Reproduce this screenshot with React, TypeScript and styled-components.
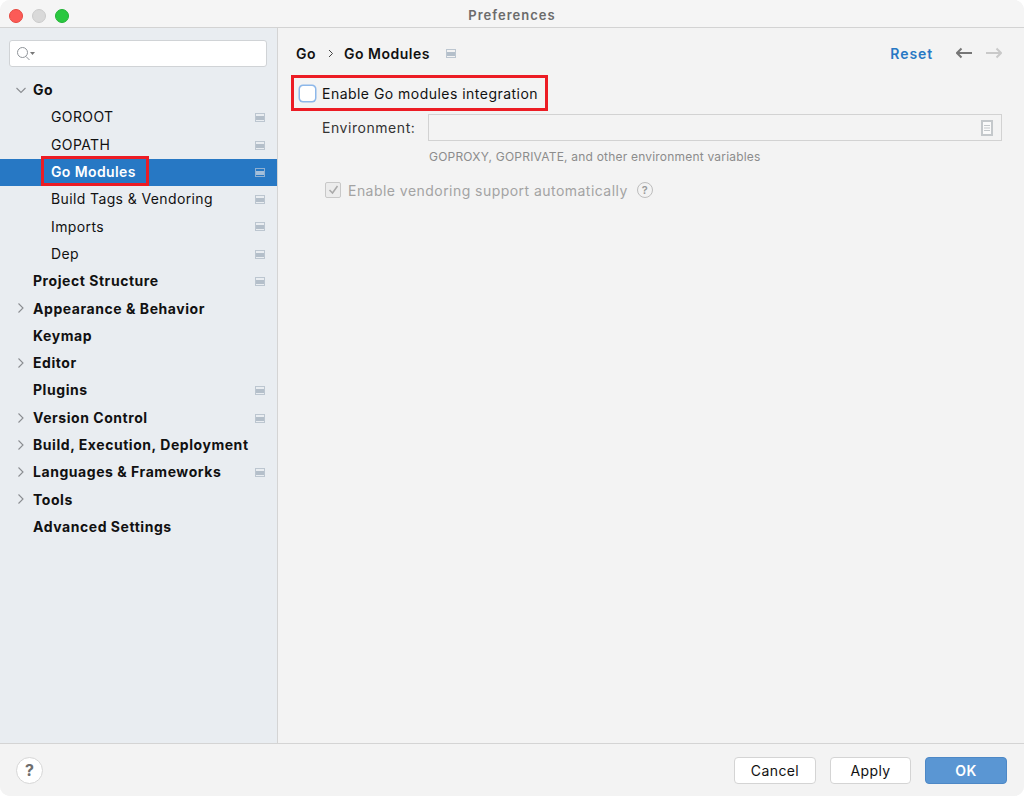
import React from 'react'
import styled, { createGlobalStyle } from 'styled-components'

const GlobalStyle = createGlobalStyle`
  html, body { margin: 0; padding: 0; background: #fff; }
  body { font-family: Inter, "Liberation Sans", sans-serif; -webkit-font-smoothing: antialiased; }
`

const Window = styled.div`
  width: 1024px;
  height: 796px;
  display: flex;
  flex-direction: column;
  overflow: hidden;
  border-radius: 10px;
  background: #f3f3f3;
`

const TitleBar = styled.div`
  position: relative;
  height: 27px;
  flex: none;
  display: flex;
  align-items: center;
  justify-content: center;
  background: #f5f5f5;
  border-bottom: 1px solid #d3d3d3;
`

const TrafficLights = styled.div`
  position: absolute;
  left: 9px;
  top: 9px;
  display: flex;
  gap: 9px;
`

const Light = styled.span<{ $color: string; $edge: string }>`
  width: 14px;
  height: 14px;
  box-sizing: border-box;
  border-radius: 50%;
  background: ${({ $color }) => $color};
  border: 1px solid ${({ $edge }) => $edge};
`

const Title = styled.div`
  margin-top: 2px;
  font-size: 13px;
  font-weight: 600;
  color: #6b6b6b;
  letter-spacing: 1px;
`

const Body = styled.div`
  flex: 1;
  display: flex;
  min-height: 0;
`

const Sidebar = styled.div`
  width: 277px;
  flex: none;
  background: #e9edf1;
  border-right: 1px solid #d4d4d4;
  padding-top: 12px;
`

const SearchBox = styled.div`
  height: 25px;
  margin: 0 10px 10px 9px;
  display: flex;
  align-items: center;
  padding-left: 6px;
  background: #fff;
  border: 1px solid #d0d3d6;
  border-radius: 3px;
`

const Row = styled.div<{ $selected?: boolean; $indent: number }>`
  position: relative;
  height: 27.3px;
  box-sizing: border-box;
  display: flex;
  align-items: center;
  padding-left: ${({ $indent }) => $indent}px;
  padding-bottom: 2px;
  background: ${({ $selected }) => ($selected ? '#2778c4' : 'transparent')};
`

const RowLabel = styled.span<{ $bold?: boolean; $selected?: boolean }>`
  position: relative;
  font-size: 14px;
  font-weight: ${({ $bold, $selected }) => ($bold ? 700 : $selected ? 600 : 400)};
  color: ${({ $selected }) => ($selected ? '#fff' : '#111')};
  letter-spacing: ${({ $bold }) => ($bold ? '0.55px' : '0.38px')};
  white-space: nowrap;
`

const Twisty = styled.svg`
  position: absolute;
  left: 15px;
  top: 7px;
`

const RowPin = styled.svg`
  position: absolute;
  left: 255px;
  top: 9px;
`

const RedBox = styled.span<{ $l: number; $t: number; $r: number; $b: number }>`
  position: absolute;
  left: ${({ $l }) => $l}px;
  top: ${({ $t }) => $t}px;
  right: ${({ $r }) => $r}px;
  bottom: ${({ $b }) => $b}px;
  border: 3px solid #ec1c24;
  pointer-events: none;
`

const Main = styled.div`
  flex: 1;
  min-width: 0;
  padding: 0 22px 0 18px;
`

const Header = styled.div`
  height: 52px;
  box-sizing: border-box;
  padding-bottom: 2px;
  display: flex;
  align-items: center;
`

const Crumb = styled.span`
  font-size: 14px;
  font-weight: 600;
  color: #111;
  letter-spacing: 0.5px;
`

const CrumbSep = styled.svg`
  margin: 0 11px 0 12px;
`

const HeaderPin = styled.svg`
  margin-left: 16px;
`

const ResetLink = styled.span`
  margin-left: auto;
  font-size: 14px;
  font-weight: 600;
  color: #2778c4;
  letter-spacing: 0.9px;
`

const NavArrows = styled.div`
  display: flex;
  gap: 14px;
  margin: 0 0 0 23px;
`

const EnableRow = styled.div`
  position: relative;
  width: fit-content;
  height: 24px;
  margin-top: 1px;
  display: flex;
  align-items: center;
  gap: 7px;
  padding-left: 3px;
`

const Check = styled.span`
  width: 13px;
  height: 13px;
  background: #fff;
  border: 1px solid #fff;
  border-radius: 3px;
  box-shadow: 0 0 0 1.5px #8db8ea;
  margin-left: 1px;
`

const EnableLabel = styled.span`
  font-size: 14px;
  color: #111;
  letter-spacing: 0.47px;
`

const EnvRow = styled.div`
  display: flex;
  align-items: center;
  margin: 9px 0 0 26px;
  height: 27px;
`

const EnvLabel = styled.label`
  width: 106px;
  flex: none;
  font-size: 14px;
  color: #333;
  letter-spacing: 0.55px;
`

const EnvField = styled.div`
  flex: 1;
  height: 27px;
  box-sizing: border-box;
  display: flex;
  align-items: center;
  justify-content: flex-end;
  padding-right: 8px;
  background: #f3f3f3;
  border: 1px solid #d2d2d2;
`

const Hint = styled.div`
  margin: 8px 0 0 133px;
  font-size: 12px;
  line-height: 15px;
  color: #8c8c8c;
  letter-spacing: 0.2px;
`

const VendorRow = styled.div`
  display: flex;
  align-items: center;
  margin: 16px 0 0 29px;
  height: 20px;
`

const DisabledCheck = styled.span`
  width: 16px;
  height: 16px;
  box-sizing: border-box;
  display: flex;
  align-items: center;
  justify-content: center;
  background: #ececec;
  border: 1px solid #c8c8c8;
  border-radius: 2px;
  margin-right: 7px;
`

const VendorLabel = styled.span`
  font-size: 14px;
  color: #a3a3a3;
  letter-spacing: 0.46px;
`

const HelpSmall = styled.span`
  width: 16px;
  height: 16px;
  box-sizing: border-box;
  margin-left: 9px;
  display: flex;
  align-items: center;
  justify-content: center;
  border: 1px solid #bdbdbd;
  border-radius: 50%;
  font-size: 11px;
  font-weight: 600;
  color: #9a9a9a;
`

const Footer = styled.div`
  height: 52px;
  flex: none;
  display: flex;
  align-items: center;
  padding: 0 17px 0 16px;
  background: #f3f3f3;
  border-top: 1px solid #d4d4d4;
`

const HelpButton = styled.div`
  width: 25px;
  height: 25px;
  display: flex;
  align-items: center;
  justify-content: center;
  background: #fff;
  border: 1px solid #d6d6d6;
  border-radius: 50%;
  font-size: 16px;
  font-weight: 700;
  color: #6e6e6e;
`

const FooterActions = styled.div`
  margin-left: auto;
  display: flex;
  gap: 14px;
`

const ActionButton = styled.button<{ $primary?: boolean; $narrow?: boolean }>`
  width: ${({ $narrow }) => ($narrow ? 81 : 82)}px;
  height: 27px;
  padding: 0;
  box-sizing: border-box;
  font-family: inherit;
  font-size: 14px;
  font-weight: ${({ $primary }) => ($primary ? 600 : 400)};
  letter-spacing: 0.4px;
  color: ${({ $primary }) => ($primary ? '#fff' : '#111')};
  background: ${({ $primary }) => ($primary ? '#5a96d3' : '#fff')};
  border: 1px solid ${({ $primary }) => ($primary ? '#4d88c6' : '#d4d4d4')};
  border-radius: 4px;
`

const Pin = ({ dark }: { dark?: boolean }) => (
  <>
    <rect x="0.5" y="0.5" width="9" height="8" fill="none" stroke={dark ? '#8fb0d2' : '#bcc6d0'} />
    <rect x="1" y="3" width="8" height="4" fill={dark ? '#a4bfda' : '#b4bfca'} />
  </>
)

type Item = { label: string; indent: number; bold?: boolean; arrow?: 'open' | 'closed'; pin?: boolean; selected?: boolean }

const items: Item[] = [
  { label: 'Go', indent: 33, bold: true, arrow: 'open' },
  { label: 'GOROOT', indent: 51, pin: true },
  { label: 'GOPATH', indent: 51, pin: true },
  { label: 'Go Modules', indent: 51, pin: true, selected: true },
  { label: 'Build Tags & Vendoring', indent: 51, pin: true },
  { label: 'Imports', indent: 51, pin: true },
  { label: 'Dep', indent: 51, pin: true },
  { label: 'Project Structure', indent: 33, bold: true, pin: true },
  { label: 'Appearance & Behavior', indent: 33, bold: true, arrow: 'closed' },
  { label: 'Keymap', indent: 33, bold: true },
  { label: 'Editor', indent: 33, bold: true, arrow: 'closed' },
  { label: 'Plugins', indent: 33, bold: true, pin: true },
  { label: 'Version Control', indent: 33, bold: true, arrow: 'closed', pin: true },
  { label: 'Build, Execution, Deployment', indent: 33, bold: true, arrow: 'closed' },
  { label: 'Languages & Frameworks', indent: 33, bold: true, arrow: 'closed', pin: true },
  { label: 'Tools', indent: 33, bold: true, arrow: 'closed' },
  { label: 'Advanced Settings', indent: 33, bold: true },
]

export default function App() {
  return (
    <>
      <GlobalStyle />
      <Window>
        <TitleBar>
          <TrafficLights>
            <Light $color="#fc5b57" $edge="#e5483f" />
            <Light $color="#d9d9d9" $edge="#cbcbcb" />
            <Light $color="#2ac840" $edge="#22b135" />
          </TrafficLights>
          <Title>Preferences</Title>
        </TitleBar>
        <Body>
          <Sidebar>
            <SearchBox>
              <svg width="20" height="16" viewBox="0 0 20 16" fill="none">
                <circle cx="6.5" cy="6.5" r="5" stroke="#8f9499" />
                <path d="M10 10.5l3.5 3.5" stroke="#8f9499" />
                <path d="M14 6h5l-2.500 3z" fill="#777" />
              </svg>
            </SearchBox>
            {items.map((item) => (
              <Row key={item.label} $indent={item.indent} $selected={item.selected}>
                {item.arrow && (
                  <Twisty width="12" height="12" viewBox="0 0 12 12" fill="none" stroke="#8a8d91" strokeWidth="1.1">
                    {item.arrow === 'open' ? <path d="M1.500 4l4.500 4.500L10.500 4" /> : <path d="M3.500 1.500L8 6l-4.500 4.500" />}
                  </Twisty>
                )}
                <RowLabel $bold={item.bold} $selected={item.selected}>
                  {item.label}
                  {item.selected && <RedBox $l={-10} $t={-7} $r={-13} $b={-6} />}
                </RowLabel>
                {item.pin && (
                  <RowPin width="10" height="9" viewBox="0 0 10 9">
                    <Pin dark={item.selected} />
                  </RowPin>
                )}
              </Row>
            ))}
          </Sidebar>
          <Main>
            <Header>
              <Crumb>Go</Crumb>
              <CrumbSep width="5" height="9" viewBox="0 0 5 9" fill="none" stroke="#444" strokeWidth="1">
                <path d="M1 1l3.500 3.500L1 8" />
              </CrumbSep>
              <Crumb>Go Modules</Crumb>
              <HeaderPin width="10" height="9" viewBox="0 0 10 9">
                <Pin />
              </HeaderPin>
              <ResetLink>Reset</ResetLink>
              <NavArrows>
                <svg width="16" height="12" viewBox="0 0 16 12" fill="none" stroke="#767676" strokeWidth="2">
                  <path d="M5.500 1.500L1 6l4.500 4.500M1 6h15" />
                </svg>
                <svg width="16" height="12" viewBox="0 0 16 12" fill="none" stroke="#c9c9c9" strokeWidth="2">
                  <path d="M10.500 1.500L15 6l-4.500 4.500M0 6h15" />
                </svg>
              </NavArrows>
            </Header>
            <EnableRow>
              <Check />
              <EnableLabel>Enable Go modules integration</EnableLabel>
              <RedBox $l={-5} $t={-6} $r={-10} $b={-6} />
            </EnableRow>
            <EnvRow>
              <EnvLabel>Environment:</EnvLabel>
              <EnvField>
                <svg width="12" height="16" viewBox="0 0 12 16">
                  <rect x="1" y="1" width="10" height="14" fill="#fafafa" stroke="#c4c8cb" strokeWidth="2" />
                  <path d="M3 5.500h6M3 8h6M3 10.500h6" stroke="#c4c8cb" />
                </svg>
              </EnvField>
            </EnvRow>
            <Hint>GOPROXY, GOPRIVATE, and other environment variables</Hint>
            <VendorRow>
              <DisabledCheck>
                <svg width="11" height="10" viewBox="0 0 11 10" fill="none" stroke="#a9a9a9" strokeWidth="1.5">
                  <path d="M1.500 5l3 3 5-7" />
                </svg>
              </DisabledCheck>
              <VendorLabel>Enable vendoring support automatically</VendorLabel>
              <HelpSmall>?</HelpSmall>
            </VendorRow>
          </Main>
        </Body>
        <Footer>
          <HelpButton>?</HelpButton>
          <FooterActions>
            <ActionButton>Cancel</ActionButton>
            <ActionButton $narrow>Apply</ActionButton>
            <ActionButton $primary>OK</ActionButton>
          </FooterActions>
        </Footer>
      </Window>
    </>
  )
}
